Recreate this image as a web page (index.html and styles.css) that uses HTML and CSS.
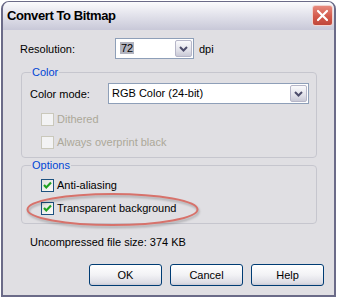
FILE: index.html
```html
<!DOCTYPE html>
<html lang="en">
<head>
    <meta charset="UTF-8">
    <title>Convert To Bitmap</title>
    <link rel="stylesheet" href="styles.css">
</head>
<body>
    <div class="window">
        <div class="titlebar">
            <span class="title">Convert To Bitmap</span>
            <span class="close-btn">
                <svg width="19" height="19" viewBox="0 0 19 19"><path d="M5 5 L14 14 M14 5 L5 14" stroke="#fff" stroke-width="2.2" stroke-linecap="round"/></svg>
            </span>
        </div>

        <div class="client">
            <div class="res-row">
                <span class="res-label">Resolution:</span>
                <div class="combo res-combo">
                    <span class="combo-value"><span class="sel">72</span></span>
                    <span class="combo-btn">
                        <svg width="15" height="17" viewBox="0 0 15 17"><path d="M4 7 L7.5 10.5 L11 7" fill="none" stroke="#4d4d6b" stroke-width="2"/></svg>
                    </span>
                </div>
                <span class="unit">dpi</span>
            </div>

            <fieldset class="group color-group">
                <legend>Color</legend>
                <div class="mode-row">
                    <span class="mode-label">Color mode:</span>
                    <div class="combo mode-combo">
                        <span class="combo-value">RGB Color (24-bit)</span>
                        <span class="combo-btn">
                            <svg width="15" height="17" viewBox="0 0 15 17"><path d="M4 7 L7.5 10.5 L11 7" fill="none" stroke="#4d4d6b" stroke-width="2"/></svg>
                        </span>
                    </div>
                </div>
                <div class="check disabled dithered"><span class="box"></span>Dithered</div>
                <div class="check disabled"><span class="box"></span>Always overprint black</div>
            </fieldset>

            <fieldset class="group options-group">
                <legend>Options</legend>
                <div class="check first">
                    <span class="box"><svg width="11" height="11" viewBox="0 0 11 11"><path d="M2 5 L4.3 7.4 L9 2.6" fill="none" stroke="#21a121" stroke-width="2.2"/></svg></span>Anti-aliasing
                </div>
                <div class="check">
                    <span class="box"><svg width="11" height="11" viewBox="0 0 11 11"><path d="M2 5 L4.3 7.4 L9 2.6" fill="none" stroke="#21a121" stroke-width="2.2"/></svg></span>Transparent background
                </div>
            </fieldset>

            <p class="filesize">Uncompressed file size: 374 KB</p>

            <div class="buttons">
                <button>OK</button>
                <button>Cancel</button>
                <button>Help</button>
            </div>
        </div>

        <!-- annotation ring around the option -->
        <svg class="callout" width="180" height="42" viewBox="0 0 180 42">
            <ellipse cx="88.5" cy="19.5" rx="85" ry="15.5" fill="none" stroke="#d7726b" stroke-width="2"/>
        </svg>
    </div>
</body>
</html>
```

FILE: styles.css
```css
body {
    margin: 0;
    background: #fff;
    font-family: "Liberation Sans", Arial, sans-serif;
    font-size: 11px;
    color: #000;
}
.window {
    position: relative;
    width: 335px;
    height: 296px;
    margin: 1px 0 0 1px;
    box-sizing: border-box;
    border: 2px solid #6b6b88;
    border-top-width: 1px;
    border-radius: 8px 8px 0 0;
    background: #e0dfe3;
    overflow: hidden;
}
.titlebar {
    display: flex;
    justify-content: space-between;
    height: 28px;
    background: linear-gradient(#fbfbfd, #e6e6ee 40%, #c8c8d8);
    border-bottom: 0;
}
.title {
    padding-left: 4px;
    line-height: 28px;
    font-size: 13px;
    font-weight: bold;
    letter-spacing: -0.4px;
}
.close-btn {
    width: 21px;
    height: 21px;
    margin: 3px 1px 0 0;
    box-sizing: border-box;
    border: 1px solid #f2d4d0;
    border-radius: 3px;
    background: linear-gradient(#e78a7e, #d35a4c 55%, #c0473a);
    display: flex;
    align-items: center;
    justify-content: center;
}
.client {
    padding: 0 17px 0 18px;
}
.res-row {
    display: flex;
    align-items: center;
    margin: 8px 0 0 -1px;
}
.res-label {
    width: 95px;
}
.combo {
    display: flex;
    height: 21px;
    box-sizing: border-box;
    border: 1px solid #8e9fb8;
    background: #fff;
}
.combo-value {
    flex: 1;
    padding-left: 3px;
    line-height: 19px;
    white-space: nowrap;
    overflow: hidden;
}
.sel {
    display: inline-block;
    padding: 0 1px;
    line-height: 12px;
    margin-left: 1px;
    background: #b2b4bf;
}
.combo-btn {
    width: 17px;
    margin: 1px;
    box-sizing: border-box;
    border: 1px solid #b6b6c8;
    border-radius: 2px;
    background: linear-gradient(#fafafc, #e2e2ea 60%, #c9c9d6);
    display: flex;
    align-items: center;
    justify-content: center;
}
.res-combo {
    width: 79px;
}
.unit {
    margin-left: 5px;
}
.group {
    margin: 0;
    padding: 0 6px 8px 8px;
    border: 1px solid #c6c6ce;
    border-radius: 4px;
}
.group legend {
    margin-left: 1px;
    padding: 0 1px;
    line-height: 13px;
    color: #0046d5;
}
.color-group {
    margin-top: 7px;
    padding-top: 4px;
}
.options-group {
    margin-top: 1px;
    padding-top: 7px;
}
.mode-row {
    display: flex;
    align-items: center;
}
.mode-label {
    width: 78px;
}
.mode-combo {
    width: 201px;
}
.check {
    display: flex;
    align-items: center;
    height: 13px;
    margin: 10px 0 0 11px;
    line-height: 13px;
}
.check.dithered {
    margin-top: 9px;
}
.check.first {
    margin-top: 0;
}
.box {
    width: 13px;
    height: 13px;
    margin-right: 3px;
    box-sizing: border-box;
    border: 1px solid #1c5180;
    background: linear-gradient(135deg, #e2e2dd, #fbfbf9);
    display: flex;
    align-items: center;
    justify-content: center;
}
.check.disabled {
    color: #aca899;
}
.check.disabled .box {
    border-color: #cac8bb;
    background: #f3f3f4;
}
.filesize {
    margin: 12px 0 0 9px;
    line-height: 13px;
}
.buttons {
    display: flex;
    justify-content: flex-end;
    gap: 8px;
    margin: 15px -7px 0 0;
}
.buttons button {
    width: 73px;
    height: 22px;
    padding: 0;
    border: 1px solid #003c74;
    border-radius: 3px;
    background: linear-gradient(#ffffff, #f2f2f5 50%, #dcdce4 90%, #c8c8d4);
    font-family: "Liberation Sans", Arial, sans-serif;
    font-size: 11px;
    color: #000;
}
.callout {
    position: absolute;
    left: 21px;
    top: 188px;
    filter: drop-shadow(1px 2px 1px rgba(0, 0, 0, 0.25));
}
```
